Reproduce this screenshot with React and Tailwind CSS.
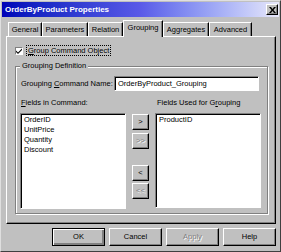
import React from "react";

const raised =
  "border border-t-white border-l-white border-b-black border-r-black shadow-[inset_-1px_-1px_0_#808080]";
const sunken =
  "border border-t-[#808080] border-l-[#808080] border-b-white border-r-white shadow-[inset_1px_1px_0_#000]";

const tabs = [
  { label: "General", w: "w-[34px]" },
  { label: "Parameters", w: "w-[46px]" },
  { label: "Relation", w: "w-[35px]" },
  { label: "Grouping", w: "w-[40px]", active: true },
  { label: "Aggregates", w: "w-[46px]" },
  { label: "Advanced", w: "w-[43px]" },
];

function Tab({ label, w, active }) {
  if (active) {
    return (
      <div
        className={`${w} relative z-10 -mb-[1px] flex h-[17px] items-start justify-center border-l border-t border-r border-l-white border-t-white border-r-black bg-[#c0c0c0] pt-[3px] shadow-[inset_-1px_0_0_#808080]`}
      >
        {label}
      </div>
    );
  }
  return (
    <div
      className={`${w} flex h-[14px] items-center justify-center border-l border-t border-r border-l-white border-t-white border-r-black shadow-[inset_-1px_0_0_#808080]`}
    >
      {label}
    </div>
  );
}

function ArrowButton({ label, className, disabled }) {
  return (
    <div
      className={`${raised} ${className} flex h-[16px] w-[17px] items-center justify-center bg-[#c0c0c0] ${
        disabled ? "text-[#808080] [text-shadow:1px_1px_0_#fff]" : "text-black"
      }`}
    >
      {label}
    </div>
  );
}

function DialogButton({ label, isDefault, disabled }) {
  return (
    <div
      className={`flex h-[18px] w-[53px] items-center justify-center bg-[#c0c0c0] ${
        isDefault
          ? "border border-black shadow-[inset_1px_1px_0_#fff,inset_-2px_-2px_0_#808080]"
          : raised
      } ${disabled ? "text-[#808080] [text-shadow:1px_1px_0_#fff]" : "text-black"}`}
    >
      {label}
    </div>
  );
}

export default function App() {
  return (
    <div className="h-[252px] w-[281px] overflow-hidden border border-l-[#dfdfdf] border-t-[#dfdfdf] border-r-[#404040] border-b-[#404040] bg-[#c0c0c0] font-['Liberation_Sans',Arial,sans-serif] text-[7.5px] leading-none text-black">
      {/* title bar */}
      <div className="mx-[1px] mt-[1px] flex h-[15px] items-center justify-between bg-gradient-to-r from-[#0000b8] via-[#5a5ae8] to-[#e8e8fa] pl-[3px] pr-[1px]">
        <span className="text-[8px] font-bold text-white">OrderByProduct Properties</span>
        <div className="flex h-[11px] w-[12px] items-center justify-center border border-t-white border-l-white border-b-black border-r-black bg-[#c0c0c0] shadow-[inset_-1px_-1px_0_#808080]">
          <svg width="7" height="6" viewBox="0 0 7 6">
            <path d="M0 0h2l1.5 2 1.5-2h2L4.5 3 7 6H5L3.5 4 2 6H0l2.5-3z" fill="#000" />
          </svg>
        </div>
      </div>

      {/* tabs */}
      <div className="mt-[3px] flex h-[16px] items-end pl-[7px]">
        {tabs.map((t) => (
          <Tab key={t.label} {...t} />
        ))}
      </div>

      {/* panel */}
      <div className="ml-[5px] h-[188px] w-[270px] border border-l-white border-t-white border-r-black border-b-black shadow-[inset_-1px_-1px_0_#808080]">
        <div className="ml-[8px] mt-[8px] flex h-[11px] items-center">
          <div className="flex h-[8px] w-[8px] items-center justify-center border border-t-[#808080] border-l-[#808080] border-b-white border-r-white bg-white">
            <svg width="6" height="6" viewBox="0 0 6 6">
              <path d="M0 2.5l2 2 4-4v1.5l-4 4-2-2z" fill="#000" />
            </svg>
          </div>
          <div className="ml-[3px] flex h-[11px] items-center border border-dotted border-black px-[1px]">
            <span>
              <span className="underline">G</span>roup Command Object
            </span>
          </div>
        </div>

        {/* group box */}
        <div className="relative ml-[8px] mt-[10px] h-[148px] w-[253px] border border-[#808080] shadow-[inset_1px_1px_0_#fff,1px_1px_0_#fff]">
          <span className="absolute -top-[5px] left-[4px] bg-[#c0c0c0] px-[2px]">Grouping Definition</span>

          <div className="mt-[9px] flex h-[15px] items-center pl-[5px]">
            <span className="w-[93px]">
              Grouping <span className="underline">C</span>ommand Name:
            </span>
            <div className={`${sunken} flex h-[15px] w-[145px] items-center bg-white pl-[3px]`}>
              OrderByProduct_Grouping
            </div>
          </div>

          <div className="mt-[7px] flex h-[10px] items-center pl-[5px]">
            <span className="w-[136px]">
              <span className="underline">F</span>ields in Command:
            </span>
            <span>
              Fields Used for G<span className="underline">r</span>ouping
            </span>
          </div>

          <div className="mt-[5px] flex items-start pl-[4px]">
            <div className={`${sunken} h-[96px] w-[106px] bg-white pl-[3px] pt-[1px] leading-[10px]`}>
              <div>OrderID</div>
              <div>UnitPrice</div>
              <div>Quantity</div>
              <div>Discount</div>
            </div>
            <div className="ml-[6px] flex flex-col">
              <ArrowButton label=">" className="mt-[1px]" />
              <ArrowButton label=">>" className="mt-[3px]" disabled />
              <ArrowButton label="<" className="mt-[16px]" />
              <ArrowButton label="<<" className="mt-[2px]" disabled />
            </div>
            <div className={`${sunken} ml-[6px] h-[95px] w-[106px] bg-white pl-[3px] pt-[1px] leading-[10px]`}>
              <div>ProductID</div>
            </div>
          </div>
        </div>
      </div>

      {/* dialog buttons */}
      <div className="mt-[4px] flex gap-[4px] pl-[51px]">
        <DialogButton label="OK" isDefault />
        <DialogButton label="Cancel" />
        <DialogButton label="Apply" disabled />
        <DialogButton label="Help" />
      </div>
    </div>
  );
}
